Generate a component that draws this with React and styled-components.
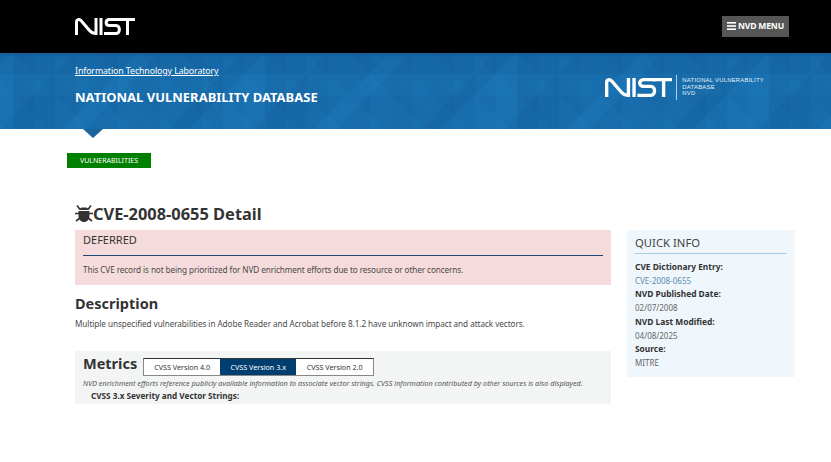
import React from 'react';
import styled, { createGlobalStyle } from 'styled-components';

const GlobalStyle = createGlobalStyle`
    html, body {
        margin: 0;
        background: #fff;
        overflow: hidden;
    }
    body {
        font-family: 'Noto Sans', 'Open Sans', sans-serif;
        color: #333;
    }
`;

const TopBar = styled.header`
    height: 53px;
    background: #000;
    display: flex;
    justify-content: space-between;
    align-items: center;
    padding: 0 42px 0 75px;
`;

const MenuButton = styled.button`
    width: 67px;
    height: 21px;
    padding: 0;
    border: 0;
    background: #565656;
    color: #fff;
    font: 700 8.6px/21px 'Noto Sans', sans-serif;
    letter-spacing: -0.2px;
    display: flex;
    align-items: center;
    justify-content: center;
    gap: 2px;
    margin-top: -1px;
`;

const Banner = styled.div`
    position: relative;
    height: 76px;
    background-color: #1b75b5;
    background-image:
        linear-gradient(180deg, rgba(0, 30, 70, 0.14), transparent 4px),
        linear-gradient(45deg, rgba(0, 40, 90, 0.05) 50%, transparent 50%),
        linear-gradient(135deg, rgba(0, 40, 90, 0.07) 50%, transparent 50%),
        linear-gradient(315deg, rgba(0, 40, 90, 0.06) 50%, transparent 50%),
        linear-gradient(225deg, rgba(0, 40, 90, 0.04) 50%, transparent 50%);
    background-size: 100% 100%, 42px 42px, 126px 126px, 84px 84px, 21px 21px;
    background-position: 0 0, 13px 21px, 13px 0, 55px 21px, 13px 0;
    display: flex;
    justify-content: space-between;
    padding: 0 67px 0 75px;
    color: #fff;

    &::after {
        content: '';
        position: absolute;
        left: 83px;
        top: 100%;
        border-left: 10px solid transparent;
        border-right: 10px solid transparent;
        border-top: 9px solid #1a659c;
    }
`;

const BannerText = styled.div`
    display: flex;
    flex-direction: column;
`;

const LabLink = styled.a`
    margin-top: 11px;
    font-size: 8.8px;
    letter-spacing: -0.1px;
    line-height: 14px;
    color: #fff;
    text-decoration: underline;
`;

const SiteTitle = styled.div`
    margin-top: 9px;
    font-size: 13px;
    line-height: 20px;
    font-weight: 700;
`;

const BannerLogo = styled.div`
    display: flex;
    align-items: center;
    margin-top: 21px;
    height: 26px;
`;

const LogoDivider = styled.div`
    width: 1px;
    height: 25px;
    margin: 0 5px 0 4px;
    background: #b9d3e6;
`;

const LogoCaption = styled.div`
    font-family: 'Liberation Sans', sans-serif;
    font-size: 5.8px;
    letter-spacing: 0.3px;
    line-height: 6.7px;
    color: #e6f0f7;
`;

const Content = styled.main`
    padding: 24px 0 0 75px;
`;

const Tab = styled.div`
    width: 84px;
    height: 15px;
    margin-left: -8px;
    background: #008000;
    color: #fff;
    font-size: 7px;
    line-height: 15px;
    text-align: center;
`;

const Title = styled.h2`
    margin: 36px 0 6px;
    height: 20px;
    display: flex;
    align-items: center;
    font-size: 16.4px;
    line-height: 20px;
    font-weight: 700;
`;

const Columns = styled.div`
    display: grid;
    grid-template-columns: 536px 168px;
    gap: 16px;
    align-items: start;
`;

const Notice = styled.section`
    height: 55px;
    box-sizing: border-box;
    padding: 2px 8px 0;
    background: #f5dbdb;
`;

const NoticeTitle = styled.div`
    font-size: 11px;
    line-height: 15px;
    padding-bottom: 8px;
    border-bottom: 1px solid #1c4a78;
`;

const NoticeText = styled.p`
    margin: 8px 0 0;
    font-size: 8.2px;
    letter-spacing: -0.1px;
    line-height: 12px;
    color: #4a4a4a;
`;

const SectionTitle = styled.h3`
    margin: 8px 0 0;
    font-size: 14.5px;
    line-height: 20px;
    font-weight: 700;
`;

const Body = styled.p`
    margin: 5px 0 0;
    font-size: 8.2px;
    letter-spacing: -0.07px;
    line-height: 12px;
    color: #4a4a4a;
`;

const Metrics = styled.section`
    margin-top: 21px;
    height: 53px;
    background: #f3f4f4;
    padding: 0 0 0 8px;
`;

const MetricsHead = styled.div`
    display: flex;
    align-items: flex-start;
    gap: 6px;
    padding-top: 2px;
    height: 24px;
`;

const MetricsTitle = styled.div`
    font-size: 14.5px;
    line-height: 20px;
    font-weight: 700;
`;

const Tabs = styled.div`
    display: flex;
    margin-top: 5px;
    border: 1px solid #888;
    border-top-color: #333;
    background: #fff;
`;

const CvssTab = styled.div`
    width: ${(props) => props.$width}px;
    height: 16px;
    font-size: 7.2px;
    line-height: 16px;
    text-align: center;
    background: ${(props) => (props.$active ? '#003e6f' : '#fff')};
    color: ${(props) => (props.$active ? '#fff' : '#333')};
`;

const MetricsNote = styled.p`
    margin: 0;
    font-size: 7.25px;
    line-height: 12px;
    font-style: italic;
    color: #555;
`;

const MetricsSub = styled.div`
    margin: 1px 0 0 8px;
    font-size: 8.2px;
    line-height: 12px;
    font-weight: 700;
`;

const QuickInfo = styled.aside`
    height: 147px;
    box-sizing: border-box;
    padding: 4px 8px 0;
    background: #eff6fc;
`;

const QuickTitle = styled.div`
    font-size: 11.3px;
    line-height: 17px;
    padding-bottom: 2px;
    border-bottom: 1px solid #a9cbe5;
    margin-bottom: 6px;
    color: #444;
`;

const QuickLabel = styled.div`
    font-size: 8.4px;
    line-height: 13.7px;
    font-weight: 700;
`;

const QuickValue = styled.div`
    font-size: 8px;
    line-height: 13.7px;
    color: ${(props) => (props.$link ? '#5b8cb3' : '#666')};
`;

const NistLogo = ({ width, height }) => (
    <svg width={width} height={height} viewBox="0 0 60 17" fill="none" stroke="#fff" strokeWidth="3">
        <path d="M1.5 17V4C1.500 1.500 4 .8 6 2.600L14.500 12.500C16.500 14.800 18 15.500 21 15.500V0" />
        <path d="M26 0V17" />
        <path d="M46 1.500H34.500C30 1.500 30 7.500 34.500 7.500H41C45.500 7.500 45.500 15.500 41 15.500H29" />
        <path d="M42 1.500H60M52.500 1.500V17" />
    </svg>
);

const BugIcon = () => (
    <svg width="18" height="18" viewBox="0 0 18 18" fill="#333" stroke="#333" strokeWidth="1.6">
        <path d="M4.500 5C4.500 3 6 2.500 9 2.500S13.500 3 13.500 5z" stroke="none" />
        <path d="M3.500 6h11v5c0 3.500-2.500 6-5.500 6S3.500 14.500 3.500 11z" stroke="none" />
        <path d="M2 0.500L5 4.500M16 0.500L13 4.500M0 8.500H18M1 16L5 13M17 16L13 13" fill="none" />
    </svg>
);

const MenuIcon = () => (
    <svg width="9" height="8" viewBox="0 0 9 8" fill="#fff">
        <rect width="9" height="1.600" />
        <rect y="3.200" width="9" height="1.600" />
        <rect y="6.400" width="9" height="1.600" />
    </svg>
);

const App = () => {
    return (
        <>
            <GlobalStyle />
            <TopBar>
                <NistLogo width={60} height={17} />
                <MenuButton>
                    <MenuIcon />
                    NVD MENU
                </MenuButton>
            </TopBar>
            <Banner>
                <BannerText>
                    <LabLink href="#">Information Technology Laboratory</LabLink>
                    <SiteTitle>NATIONAL VULNERABILITY DATABASE</SiteTitle>
                </BannerText>
                <BannerLogo>
                    <NistLogo width={67} height={19} />
                    <LogoDivider />
                    <LogoCaption>
                        NATIONAL VULNERABILITY
                        <br />
                        DATABASE
                        <br />
                        NVD
                    </LogoCaption>
                </BannerLogo>
            </Banner>
            <Content>
                <Tab>VULNERABILITIES</Tab>
                <Title>
                    <BugIcon />
                    CVE-2008-0655 Detail
                </Title>
                <Columns>
                    <div>
                        <Notice>
                            <NoticeTitle>DEFERRED</NoticeTitle>
                            <NoticeText>
                                This CVE record is not being prioritized for NVD enrichment efforts due to resource or other concerns.
                            </NoticeText>
                        </Notice>
                        <SectionTitle>Description</SectionTitle>
                        <Body>
                            Multiple unspecified vulnerabilities in Adobe Reader and Acrobat before 8.1.2 have unknown impact and attack vectors.
                        </Body>
                        <Metrics>
                            <MetricsHead>
                                <MetricsTitle>Metrics</MetricsTitle>
                                <Tabs>
                                    <CvssTab $width={76}>CVSS Version 4.0</CvssTab>
                                    <CvssTab $width={76} $active>CVSS Version 3.x</CvssTab>
                                    <CvssTab $width={77}>CVSS Version 2.0</CvssTab>
                                </Tabs>
                            </MetricsHead>
                            <MetricsNote>
                                NVD enrichment efforts reference publicly available information to associate vector strings. CVSS information contributed by other sources is also displayed.
                            </MetricsNote>
                            <MetricsSub>CVSS 3.x Severity and Vector Strings:</MetricsSub>
                        </Metrics>
                    </div>
                    <QuickInfo>
                        <QuickTitle>QUICK INFO</QuickTitle>
                        <QuickLabel>CVE Dictionary Entry:</QuickLabel>
                        <QuickValue $link>CVE-2008-0655</QuickValue>
                        <QuickLabel>NVD Published Date:</QuickLabel>
                        <QuickValue>02/07/2008</QuickValue>
                        <QuickLabel>NVD Last Modified:</QuickLabel>
                        <QuickValue>04/08/2025</QuickValue>
                        <QuickLabel>Source:</QuickLabel>
                        <QuickValue>MITRE</QuickValue>
                    </QuickInfo>
                </Columns>
            </Content>
        </>
    );
};

export default App;
